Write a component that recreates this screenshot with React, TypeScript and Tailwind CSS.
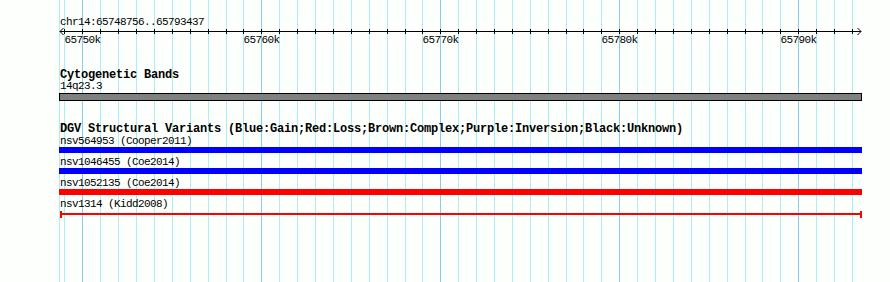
import React from "react";

const ORIGIN = 82.3;
const STEP = 17.9;
const LEFT = 59;
const WIDTH = 803;

const ks: number[] = [];
for (let k = -1; k <= 43; k++) ks.push(k);
const gridXs = ks.map((k) => Math.round(ORIGIN + k * STEP));

const labels = [
  { k: 0, t: "65750k" },
  { k: 10, t: "65760k" },
  { k: 20, t: "65770k" },
  { k: 30, t: "65780k" },
  { k: 40, t: "65790k" },
];

const MONO = '"Liberation Mono", "DejaVu Sans Mono", monospace';

function Grid() {
  return (
    <svg
      className="absolute left-0 top-0"
      width={890}
      height={282}
      shapeRendering="crispEdges"
    >
      <line x1={LEFT + 0.5} y1={0} x2={LEFT + 0.5} y2={282} stroke="#aeeeee" />
      {ks.map((k, i) => (
        <line
          key={k}
          x1={gridXs[i] + 0.5}
          y1={0}
          x2={gridXs[i] + 0.5}
          y2={282}
          stroke={k % 10 === 0 ? "#87ceeb" : "#aeeeee"}
        />
      ))}
    </svg>
  );
}

function Axis() {
  return (
    <svg width={WIDTH} height={10} className="block overflow-visible" shapeRendering="crispEdges">
      <line x1={1} y1={5.5} x2={802} y2={5.5} stroke="#000" />
      {gridXs.map((x, i) => (
        <line key={i} x1={x - LEFT + 0.5} y1={3} x2={x - LEFT + 0.5} y2={8} stroke="#000" />
      ))}
      <polyline points="4.5,2 1,5.5 4.5,9" fill="none" stroke="#000" shapeRendering="auto" />
      <polyline points="798.5,2 802,5.5 798.5,9" fill="none" stroke="#000" shapeRendering="auto" />
    </svg>
  );
}

function SmallText({ children, className = "" }: { children: React.ReactNode; className?: string }) {
  return (
    <div
      className={"pl-px h-[10px] leading-[10px] text-[11px] tracking-[-0.6px] text-black whitespace-nowrap " + className}
      style={{ fontFamily: MONO }}
    >
      {children}
    </div>
  );
}

function Title({ children, className = "" }: { children: React.ReactNode; className?: string }) {
  return (
    <div
      className={"pl-px h-[10px] leading-[10px] text-[12px] font-bold tracking-[-0.2px] text-black whitespace-nowrap " + className}
      style={{ fontFamily: MONO }}
    >
      {children}
    </div>
  );
}

function Bar({ color, className = "" }: { color: string; className?: string }) {
  return <div className={"h-[6px] w-[803px] " + color + " " + className} />;
}

export default function App() {
  return (
    <div className="relative w-[890px] h-[282px] overflow-hidden bg-[#fcfffc]">
      <Grid />
      <div className="relative flex flex-col pl-[59px] w-[890px]">
        <SmallText className="mt-[17px]">chr14:65748756..65793437</SmallText>
        <div className="mt-[-1px] w-[803px]">
          <Axis />
        </div>
        <div className="relative h-[10px] w-[803px] mt-[-1px]">
          {labels.map((l) => (
            <div
              key={l.k}
              className="absolute top-0 h-[10px] leading-[10px] text-[11px] tracking-[-0.6px] text-black whitespace-nowrap -translate-x-1/2"
              style={{
                left: ORIGIN + l.k * STEP - LEFT + 0.3,
                fontFamily: MONO,
              }}
            >
              {l.t}
            </div>
          ))}
        </div>

        <Title className="mt-[25px]">Cytogenetic Bands</Title>
        <SmallText className="mt-[1px]">14q23.3</SmallText>
        <div className="mt-[2px] h-[8px] w-[803px] bg-[#808080] border border-black" />

        <Title className="mt-[23px]">
          DGV Structural Variants (Blue:Gain;Red:Loss;Brown:Complex;Purple:Inversion;Black:Unknown)
        </Title>
        <SmallText className="mt-[2px]">nsv564953 (Cooper2011)</SmallText>
        <Bar color="bg-[#0000ff]" className="mt-[1px]" />
        <SmallText className="mt-[4px]">nsv1046455 (Coe2014)</SmallText>
        <Bar color="bg-[#0000ff]" className="mt-[1px]" />
        <SmallText className="mt-[4px]">nsv1052135 (Coe2014)</SmallText>
        <Bar color="bg-[#ff0000]" className="mt-[1px]" />
        <SmallText className="mt-[4px]">nsv1314 (Kidd2008)</SmallText>
        <div className="mt-[2px] relative h-[7px] w-[803px]">
          <div className="absolute left-[1px] top-0 h-[7px] w-[2px] bg-[#ff0000]" />
          <div className="absolute left-[1px] right-0 top-[2px] h-[2px] bg-[#ff0000]" />
          <div className="absolute right-0 top-0 h-[7px] w-[2px] bg-[#ff0000]" />
        </div>
      </div>
    </div>
  );
}
